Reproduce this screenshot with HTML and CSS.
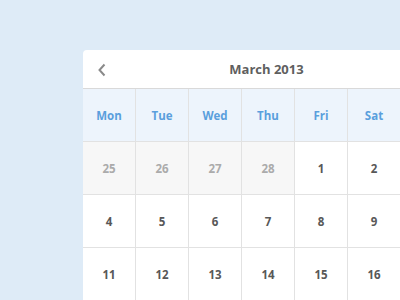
FILE: index.html
```html
<!DOCTYPE html>
<html>
<head>
<meta charset="utf-8">
<link rel="stylesheet" href="styles.css">
</head>
<body>
<div class="stage">
  <div class="calendar">
    <div class="cal-header">
      <button class="nav prev" aria-label="Previous month">
        <svg width="10" height="14" viewBox="0 0 10 14"><path d="M7.5 1.5 L2.5 7 L7.5 12.5" fill="none" stroke="#8a8a8a" stroke-width="2"/></svg>
      </button>
      <div class="title">March 2013</div>
    </div>
    <div class="grid">
      <div class="wd">Mon</div><div class="wd">Tue</div><div class="wd">Wed</div><div class="wd">Thu</div><div class="wd">Fri</div><div class="wd">Sat</div><div class="wd">Sun</div>
      <div class="day past">25</div><div class="day past">26</div><div class="day past">27</div><div class="day past">28</div><div class="day">1</div><div class="day">2</div><div class="day">3</div>
      <div class="day">4</div><div class="day">5</div><div class="day">6</div><div class="day">7</div><div class="day">8</div><div class="day">9</div><div class="day">10</div>
      <div class="day">11</div><div class="day">12</div><div class="day">13</div><div class="day">14</div><div class="day">15</div><div class="day">16</div><div class="day">17</div>
    </div>
  </div>
</div>
</body>
</html>
```
FILE: styles.css
```css
html, body {
  margin: 0;
  padding: 0;
  width: 400px;
  height: 300px;
  overflow: hidden;
  background: #deebf7;
  font-family: "Open Sans", "DejaVu Sans", sans-serif;
}
.stage {
  padding: 50px 0 0 83px;
}
.calendar {
  width: 371px;
  background: #fff;
  border-radius: 4px 4px 0 0;
  overflow: hidden;
}
.cal-header {
  position: relative;
  height: 38px;
  padding-right: 4px;
  border-bottom: 1px solid #d9d9d9;
  display: flex;
  align-items: center;
  justify-content: center;
}
.nav {
  position: absolute;
  left: 13px;
  top: 12px;
  width: 12px;
  height: 16px;
  padding: 0;
  border: 0;
  background: none;
  display: flex;
  align-items: center;
  justify-content: center;
}
.title {
  font-size: 13px;
  font-weight: 700;
  color: #5f5f5f;
}
.grid {
  display: grid;
  grid-template-columns: repeat(7, 52px);
  grid-auto-rows: 52px;
  column-gap: 1px;
  row-gap: 1px;
  background: #e2e2e2;
  padding-bottom: 1px;
}
.wd, .day {
  display: flex;
  align-items: center;
  justify-content: center;
  font-size: 11.5px;
  font-weight: 700;
}
.wd {
  background: #edf4fc;
  color: #5a9fdd;
}
.day {
  background: #fff;
  color: #585858;
}
.day.past {
  background: #f7f7f7;
  color: #ababab;
}
```
